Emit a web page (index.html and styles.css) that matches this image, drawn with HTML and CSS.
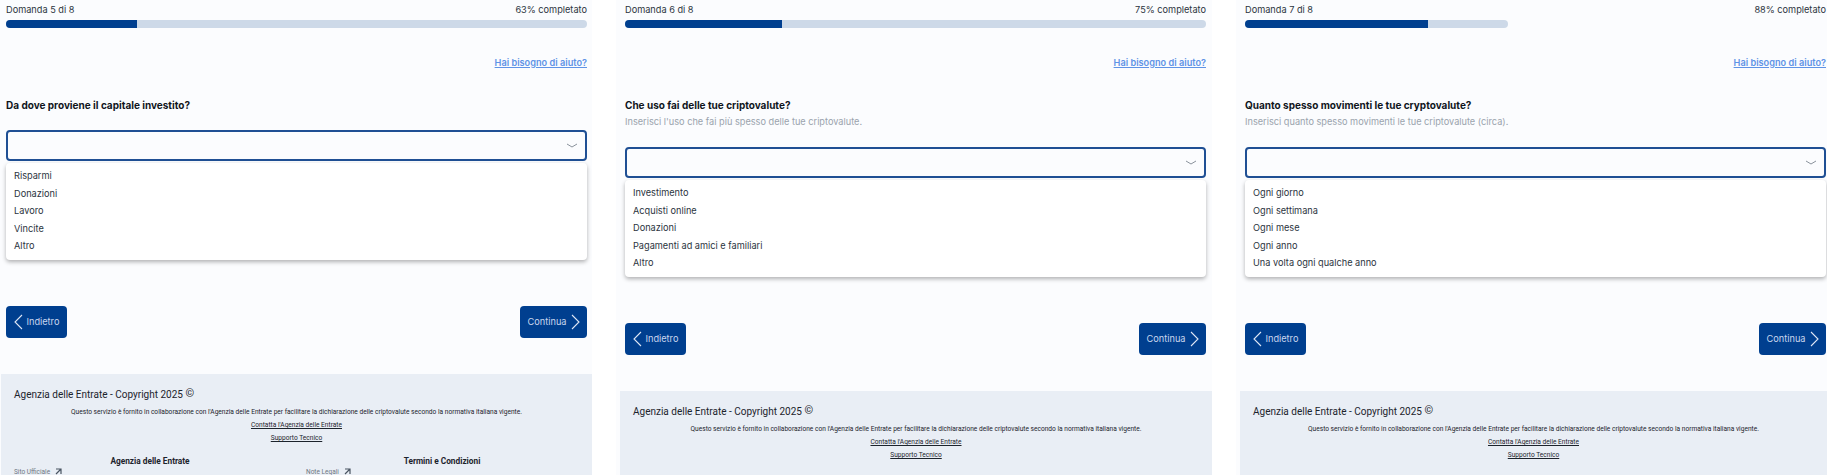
FILE: index.html
```html
<!DOCTYPE html>
<html lang="en">
<head>
  <meta charset="UTF-8">
  <meta name="viewport" content="width=device-width, initial-scale=1.0">
  <title>Questionario criptovalute</title>
  <link rel="stylesheet" href="styles.css">
</head>
<body>

  <div class="page">

    <!-- Domanda 5 -->
    <section class="panel panel-first">
      <div class="main">
        <div class="progress-head"><span>Domanda 5 di 8</span><span>63% completato</span></div>
        <div class="track"><div class="fill" style="width: 22.6%"></div></div>
        <div class="help"><a href="#">Hai bisogno di aiuto?</a></div>
        <h2 class="question">Da dove proviene il capitale investito?</h2>
        <div class="select">
          <svg class="caret" width="12" height="5" viewBox="0 0 12 5"><path d="M1 1 L6 4 L11 1" fill="none" stroke="#8a929c" stroke-width="1"/></svg>
        </div>
        <ul class="menu">
          <li>Risparmi</li>
          <li>Donazioni</li>
          <li>Lavoro</li>
          <li>Vincite</li>
          <li>Altro</li>
        </ul>
        <div class="actions">
          <a class="btn" href="#">
            <svg width="9" height="16" viewBox="0 0 9 16"><path d="M8 1 L1 8 L8 15" fill="none" stroke="#dfe7f5" stroke-width="1.1"/></svg>
            Indietro
          </a>
          <a class="btn" href="#">
            Continua
            <svg width="9" height="16" viewBox="0 0 9 16"><path d="M1 1 L8 8 L1 15" fill="none" stroke="#dfe7f5" stroke-width="1.1"/></svg>
          </a>
        </div>
      </div>
      <footer class="footer">
        <div class="footer-title">Agenzia delle Entrate - Copyright 2025 <span class="copy">©</span></div>
        <p class="footer-text">Questo servizio è fornito in collaborazione con l'Agenzia delle Entrate per facilitare la dichiarazione delle criptovalute secondo la normativa italiana vigente.</p>
        <a class="footer-link" href="#">Contatta l'Agenzia delle Entrate</a>
        <a class="footer-link" href="#">Supporto Tecnico</a>
        <div class="footer-cols">
          <div class="footer-col">
            <h4>Agenzia delle Entrate</h4>
            <a class="ext" href="#">Sito Ufficiale
              <svg width="7" height="7" viewBox="0 0 7 7"><path d="M1 1 H6 V6 M6 1 L1 6" fill="none" stroke="#4a5562" stroke-width="1.2"/></svg>
            </a>
          </div>
          <div class="footer-col">
            <h4>Termini e Condizioni</h4>
            <a class="ext" href="#">Note Legali
              <svg width="7" height="7" viewBox="0 0 7 7"><path d="M1 1 H6 V6 M6 1 L1 6" fill="none" stroke="#4a5562" stroke-width="1.2"/></svg>
            </a>
          </div>
        </div>
      </footer>
    </section>

    <!-- Domanda 6 -->
    <section class="panel panel-second">
      <div class="main">
        <div class="progress-head"><span>Domanda 6 di 8</span><span>75% completato</span></div>
        <div class="track"><div class="fill" style="width: 27%"></div></div>
        <div class="help"><a href="#">Hai bisogno di aiuto?</a></div>
        <h2 class="question">Che uso fai delle tue criptovalute?</h2>
        <p class="hint">Inserisci l'uso che fai più spesso delle tue criptovalute.</p>
        <div class="select">
          <svg class="caret" width="12" height="5" viewBox="0 0 12 5"><path d="M1 1 L6 4 L11 1" fill="none" stroke="#8a929c" stroke-width="1"/></svg>
        </div>
        <ul class="menu">
          <li>Investimento</li>
          <li>Acquisti online</li>
          <li>Donazioni</li>
          <li>Pagamenti ad amici e familiari</li>
          <li>Altro</li>
        </ul>
        <div class="actions">
          <a class="btn" href="#">
            <svg width="9" height="16" viewBox="0 0 9 16"><path d="M8 1 L1 8 L8 15" fill="none" stroke="#dfe7f5" stroke-width="1.1"/></svg>
            Indietro
          </a>
          <a class="btn" href="#">
            Continua
            <svg width="9" height="16" viewBox="0 0 9 16"><path d="M1 1 L8 8 L1 15" fill="none" stroke="#dfe7f5" stroke-width="1.1"/></svg>
          </a>
        </div>
      </div>
      <footer class="footer">
        <div class="footer-title">Agenzia delle Entrate - Copyright 2025 <span class="copy">©</span></div>
        <p class="footer-text">Questo servizio è fornito in collaborazione con l'Agenzia delle Entrate per facilitare la dichiarazione delle criptovalute secondo la normativa italiana vigente.</p>
        <a class="footer-link" href="#">Contatta l'Agenzia delle Entrate</a>
        <a class="footer-link" href="#">Supporto Tecnico</a>
      </footer>
    </section>

    <!-- Domanda 7 -->
    <section class="panel panel-third">
      <div class="main">
        <div class="progress-head"><span>Domanda 7 di 8</span><span>88% completato</span></div>
        <div class="track track-short"><div class="fill" style="width: 69.7%"></div></div>
        <div class="help"><a href="#">Hai bisogno di aiuto?</a></div>
        <h2 class="question">Quanto spesso movimenti le tue cryptovalute?</h2>
        <p class="hint">Inserisci quanto spesso movimenti le tue criptovalute (circa).</p>
        <div class="select">
          <svg class="caret" width="12" height="5" viewBox="0 0 12 5"><path d="M1 1 L6 4 L11 1" fill="none" stroke="#8a929c" stroke-width="1"/></svg>
        </div>
        <ul class="menu">
          <li>Ogni giorno</li>
          <li>Ogni settimana</li>
          <li>Ogni mese</li>
          <li>Ogni anno</li>
          <li>Una volta ogni qualche anno</li>
        </ul>
        <div class="actions">
          <a class="btn" href="#">
            <svg width="9" height="16" viewBox="0 0 9 16"><path d="M8 1 L1 8 L8 15" fill="none" stroke="#dfe7f5" stroke-width="1.1"/></svg>
            Indietro
          </a>
          <a class="btn" href="#">
            Continua
            <svg width="9" height="16" viewBox="0 0 9 16"><path d="M1 1 L8 8 L1 15" fill="none" stroke="#dfe7f5" stroke-width="1.1"/></svg>
          </a>
        </div>
      </div>
      <footer class="footer">
        <div class="footer-title">Agenzia delle Entrate - Copyright 2025 <span class="copy">©</span></div>
        <p class="footer-text">Questo servizio è fornito in collaborazione con l'Agenzia delle Entrate per facilitare la dichiarazione delle criptovalute secondo la normativa italiana vigente.</p>
        <a class="footer-link" href="#">Contatta l'Agenzia delle Entrate</a>
        <a class="footer-link" href="#">Supporto Tecnico</a>
      </footer>
    </section>

  </div>

</body>
</html>
```

FILE: styles.css
```css
html, body {
  height: 100%;
}

body {
  margin: 0;
  background: #fff;
  font-family: 'Inter', 'Liberation Sans', sans-serif;
  font-size: 9.2px;
  line-height: 12px;
  color: #2b3440;
  overflow: hidden;
}

.page {
  display: flex;
  height: 475px;
  overflow: hidden;
}

/* Panels */
.panel {
  flex: none;
  height: 475px;
  background: #fbfcfe;
  overflow: hidden;
}

.panel-first {
  width: 592px;
  margin-right: 24px;
  padding-left: 1px;
  box-sizing: border-box;
}

.panel-second {
  width: 596px;
  margin-right: 24px;
  padding-left: 4px;
  box-sizing: border-box;
}

.panel-third {
  width: 591px;
  padding-left: 4px;
  box-sizing: border-box;
}

.main {
  width: 581px;
  padding: 4px 5px 36px;
}

/* Progress */
.progress-head {
  display: flex;
  justify-content: space-between;
}

.track {
  height: 8px;
  margin-top: 4px;
  background: #cdd9e8;
  border-radius: 4px;
  overflow: hidden;
}

.track-short {
  width: 263px;
}

.fill {
  height: 100%;
  background: #003f8f;
}

.help {
  margin-top: 29px;
  text-align: right;
}

.help a {
  color: #5f93e6;
  font-weight: 600;
}

/* Question */
.question {
  margin: 30px 0 0;
  font-size: 10px;
  line-height: 12px;
  font-weight: 700;
  color: #10151c;
}

.hint {
  margin: 5px 0 1px;
  color: #9aa3ad;
}

.select {
  display: flex;
  align-items: center;
  justify-content: flex-end;
  height: 31px;
  margin-top: 19px;
  padding-right: 7px;
  box-sizing: border-box;
  border: 2px solid #1f4f94;
  border-radius: 4px;
}

.menu {
  list-style-type: none;
  margin: 2px 0 0;
  padding: 4px 0 5px;
  background: #fff;
  border-radius: 4px;
  box-shadow: 0 2px 4px rgba(0, 0, 0, 0.3);
}

.menu li {
  height: 17.6px;
  line-height: 17.6px;
  padding-left: 8px;
}

/* Buttons */
.actions {
  display: flex;
  justify-content: space-between;
  margin-top: 46px;
}

.btn {
  display: flex;
  align-items: center;
  gap: 4px;
  height: 32px;
  padding: 0 7.5px;
  background: #003f8f;
  border-radius: 4px;
  color: #c9d6ee;
  text-decoration: none;
}

/* Footer */
.footer {
  height: 120px;
  padding-top: 14px;
  box-sizing: border-box;
  background: #e9eef5;
  text-align: center;
  font-family: 'Roboto', 'Liberation Sans', sans-serif;
}

.footer-title {
  padding-left: 13px;
  font-size: 10px;
  line-height: 14px;
  color: #1c232c;
  text-align: left;
}

.copy {
  position: relative;
  top: -1px;
  font-size: 11px;
}

.footer-text {
  margin: 5px 0 0;
  font-size: 6.6px;
  line-height: 10px;
  color: #1c232c;
}

.footer-link {
  display: block;
  width: fit-content;
  margin: 3px auto 0;
  font-size: 6.6px;
  line-height: 10px;
  color: #1c232c;
}

.footer-cols {
  display: grid;
  grid-template-columns: 292px 292px;
  margin: 12px 0 0 3px;
}

.footer-col h4 {
  margin: 0;
  font-size: 8.3px;
  line-height: 12px;
  font-weight: 700;
  color: #1c232c;
}

.ext {
  display: flex;
  align-items: center;
  gap: 5px;
  padding-left: 10px;
  font-size: 6.5px;
  line-height: 10px;
  color: #6d7682;
  text-decoration: none;
}
```
